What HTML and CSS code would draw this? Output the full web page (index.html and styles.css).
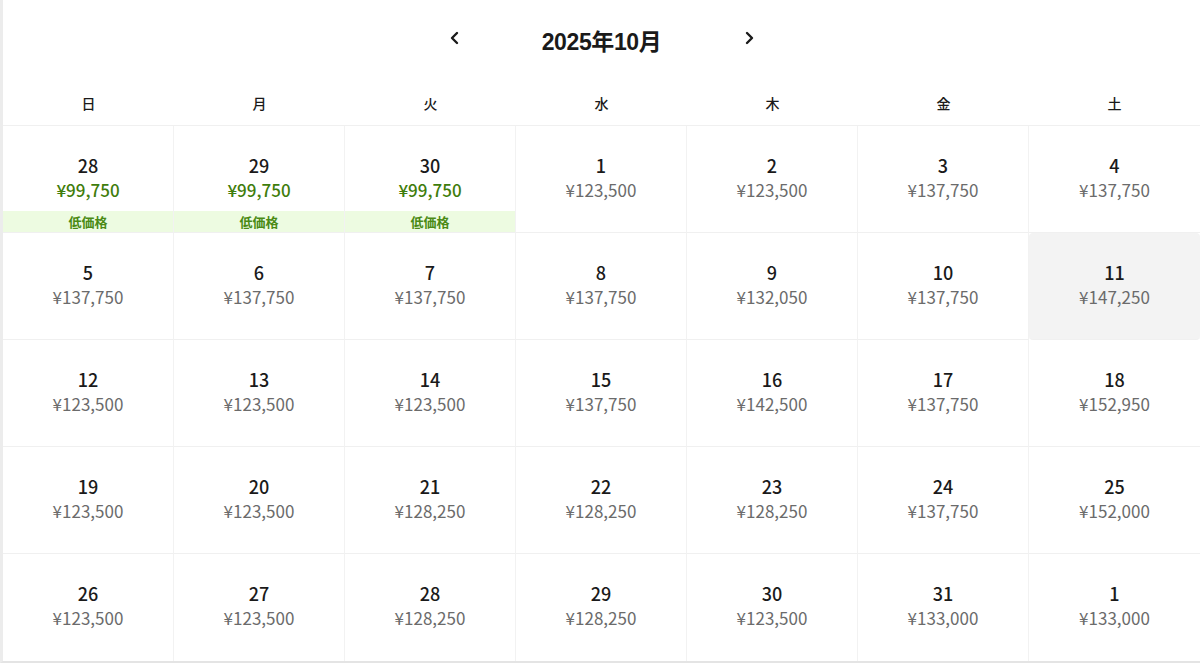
FILE: index.html
```html
<!DOCTYPE html>
<html lang="ja">
<head>
<meta charset="utf-8">
<link rel="stylesheet" href="styles.css">
</head>
<body>
<div class="cal">
  <div class="nav">
    <button class="arrow" aria-label="prev"><svg width="12" height="14" viewBox="0 0 12 14"><polyline points="8,2 3,7 8,12" fill="none" stroke="#1a1a1a" stroke-width="2.4" stroke-linecap="round" stroke-linejoin="round"/></svg></button>
    <div class="title">2025年10月</div>
    <button class="arrow" aria-label="next"><svg width="12" height="14" viewBox="0 0 12 14"><polyline points="4,2 9,7 4,12" fill="none" stroke="#1a1a1a" stroke-width="2.4" stroke-linecap="round" stroke-linejoin="round"/></svg></button>
  </div>
  <div class="weekdays">
    <div>日</div><div>月</div><div>火</div><div>水</div><div>木</div><div>金</div><div>土</div>
  </div>
  <div class="grid">
    <div class="cell low"><div class="num">28</div><div class="price">¥99,750</div><div class="tag">低価格</div></div>
    <div class="cell low"><div class="num">29</div><div class="price">¥99,750</div><div class="tag">低価格</div></div>
    <div class="cell low"><div class="num">30</div><div class="price">¥99,750</div><div class="tag">低価格</div></div>
    <div class="cell"><div class="num">1</div><div class="price">¥123,500</div></div>
    <div class="cell"><div class="num">2</div><div class="price">¥123,500</div></div>
    <div class="cell"><div class="num">3</div><div class="price">¥137,750</div></div>
    <div class="cell"><div class="num">4</div><div class="price">¥137,750</div></div>

    <div class="cell"><div class="num">5</div><div class="price">¥137,750</div></div>
    <div class="cell"><div class="num">6</div><div class="price">¥137,750</div></div>
    <div class="cell"><div class="num">7</div><div class="price">¥137,750</div></div>
    <div class="cell"><div class="num">8</div><div class="price">¥137,750</div></div>
    <div class="cell"><div class="num">9</div><div class="price">¥132,050</div></div>
    <div class="cell"><div class="num">10</div><div class="price">¥137,750</div></div>
    <div class="cell hover"><div class="num">11</div><div class="price">¥147,250</div></div>

    <div class="cell"><div class="num">12</div><div class="price">¥123,500</div></div>
    <div class="cell"><div class="num">13</div><div class="price">¥123,500</div></div>
    <div class="cell"><div class="num">14</div><div class="price">¥123,500</div></div>
    <div class="cell"><div class="num">15</div><div class="price">¥137,750</div></div>
    <div class="cell"><div class="num">16</div><div class="price">¥142,500</div></div>
    <div class="cell"><div class="num">17</div><div class="price">¥137,750</div></div>
    <div class="cell"><div class="num">18</div><div class="price">¥152,950</div></div>

    <div class="cell"><div class="num">19</div><div class="price">¥123,500</div></div>
    <div class="cell"><div class="num">20</div><div class="price">¥123,500</div></div>
    <div class="cell"><div class="num">21</div><div class="price">¥128,250</div></div>
    <div class="cell"><div class="num">22</div><div class="price">¥128,250</div></div>
    <div class="cell"><div class="num">23</div><div class="price">¥128,250</div></div>
    <div class="cell"><div class="num">24</div><div class="price">¥137,750</div></div>
    <div class="cell"><div class="num">25</div><div class="price">¥152,000</div></div>

    <div class="cell last"><div class="num">26</div><div class="price">¥123,500</div></div>
    <div class="cell last"><div class="num">27</div><div class="price">¥123,500</div></div>
    <div class="cell last"><div class="num">28</div><div class="price">¥128,250</div></div>
    <div class="cell last"><div class="num">29</div><div class="price">¥128,250</div></div>
    <div class="cell last"><div class="num">30</div><div class="price">¥123,500</div></div>
    <div class="cell last"><div class="num">31</div><div class="price">¥133,000</div></div>
    <div class="cell last"><div class="num">1</div><div class="price">¥133,000</div></div>
  </div>
</div>
</body>
</html>
```

FILE: styles.css
```css
* { box-sizing: border-box; }
html, body { margin: 0; padding: 0; background: #fff; }
body {
  font-family: "Noto Sans CJK JP", "Noto Sans", sans-serif;
  color: #1a1a1a;
  width: 1200px;
  height: 665px;
  overflow: hidden;
}
.cal {
  width: 1200px;
  border-left: 3px solid #ececec;
  border-bottom: 2px solid #e4e4e4;
}
.nav {
  height: 84px;
  display: flex;
  align-items: center;
  justify-content: center;
  gap: 12px;
}
.arrow {
  width: 24px;
  height: 24px;
  border: 0;
  background: transparent;
  padding: 0;
  display: flex;
  align-items: center;
  justify-content: center;
  margin-top: -8px;
}
.title {
  width: 246px;
  text-align: center;
  font-family: "Liberation Sans", "Noto Sans CJK JP", sans-serif;
  font-size: 23px;
  font-weight: 700;
  color: #1a1a1a;
  letter-spacing: -0.4px;
  margin-top: -4px;
}
.weekdays {
  display: grid;
  grid-template-columns: repeat(7, 1fr);
  height: 42px;
  border-bottom: 1px solid #f0f0f0;
}
.weekdays div {
  text-align: center;
  font-size: 14px;
  font-weight: 500;
  line-height: 38px;
  color: #1a1a1a;
}
.grid {
  display: grid;
  grid-template-columns: repeat(7, 1fr);
  grid-auto-rows: 107px;
}
.cell {
  display: flex;
  flex-direction: column;
  align-items: stretch;
  text-align: center;
  padding-top: 27px;
  border-right: 1px solid #f2f2f2;
  border-bottom: 1px solid #f0f0f0;
}
.cell:nth-child(7n) { border-right: 0; }
.cell.last { border-bottom: 0; }
.num {
  font-size: 18px;
  line-height: 24px;
  font-weight: 500;
  color: #1a1a1a;
}
.price {
  font-size: 17px;
  line-height: 26px;
  color: #6b6b6b;
}
.low .price {
  color: #3f7d0c;
  font-weight: 500;
}
.tag {
  margin-top: auto;
  height: 21px;
  line-height: 21px;
  font-size: 13px;
  font-weight: 700;
  color: #4a8a14;
  background: #edfbe1;
}
.hover {
  background: #f3f3f3;
  border-radius: 4px;
}
```
